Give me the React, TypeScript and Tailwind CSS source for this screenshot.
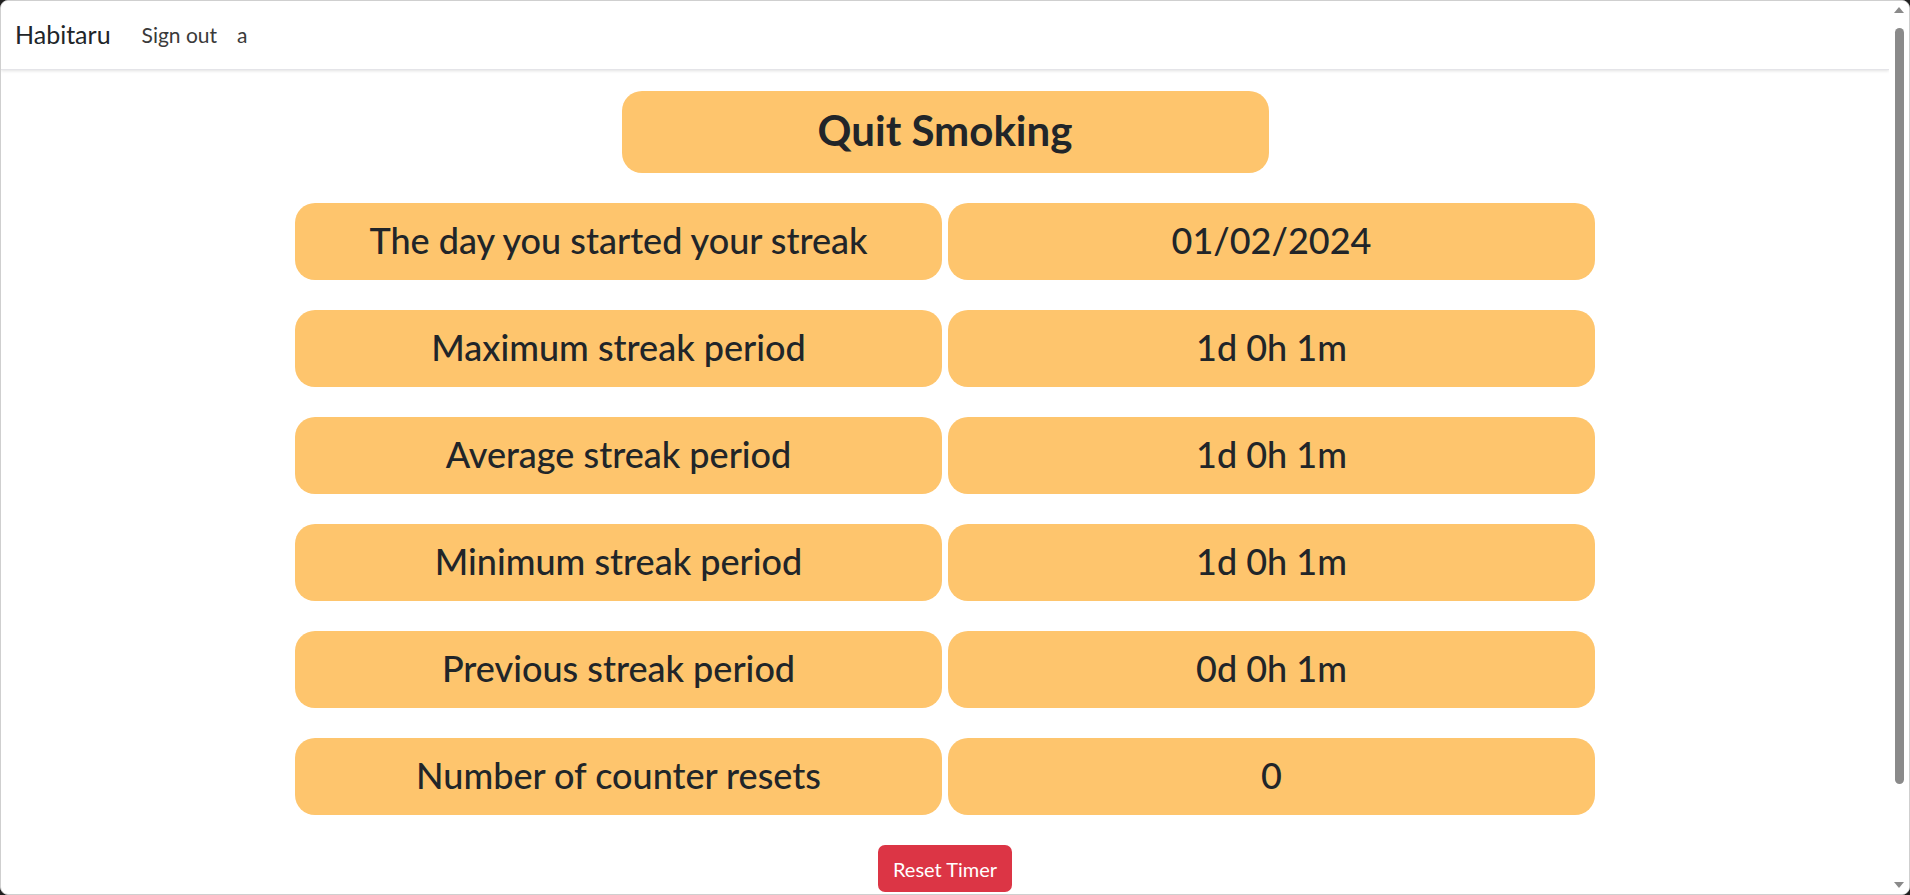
const stats = [
  { label: "The day you started your streak", value: "01/02/2024" },
  { label: "Maximum streak period", value: "1d 0h 1m" },
  { label: "Average streak period", value: "1d 0h 1m" },
  { label: "Minimum streak period", value: "1d 0h 1m" },
  { label: "Previous streak period", value: "0d 0h 1m" },
  { label: "Number of counter resets", value: "0" },
]

const font = { fontFamily: '"Segoe UI", Lato, "Noto Sans", sans-serif' }

function Navbar() {
  return (
    <nav className="h-[69px] shrink-0 flex items-center pl-[14px] bg-white shadow-[0_1px_3px_rgba(0,0,0,0.12)] border-b border-[#e4e4e8]">
      <span className="text-[25px] text-[#212529] mr-[31px]">Habitaru</span>
      <span className="text-[21px] text-[#3a3a3a] mr-[20px]">Sign out</span>
      <span className="text-[21px] text-[#3a3a3a]">a</span>
    </nav>
  )
}

function StatBox({ children }: { children: React.ReactNode }) {
  return (
    <div className="h-[77px] pb-[3px] rounded-[20px] bg-[#fec56d] flex items-center justify-center text-[36px] font-medium text-[#212529]">
      {children}
    </div>
  )
}

function Scrollbar() {
  return (
    <div className="w-[20px] shrink-0 bg-white flex flex-col items-center pt-[6px] pb-[6px]">
      <div className="w-0 h-0 border-l-[5px] border-r-[5px] border-b-[6px] border-l-transparent border-r-transparent border-b-[#8a8a8a]" />
      <div className="w-[9px] h-[756px] mt-[15px] rounded-full bg-[#8a8a8a]" />
      <div className="flex-1" />
      <div className="w-0 h-0 border-l-[5px] border-r-[5px] border-t-[6px] border-l-transparent border-r-transparent border-t-[#8a8a8a]" />
    </div>
  )
}

export default function App() {
  return (
    <div className="w-[1910px] h-[895px] bg-[#202020]" style={font}>
      <div className="w-full h-full flex overflow-hidden bg-white border border-[#cfcfcf] rounded-[8px]">
        <div className="flex-1 flex flex-col">
          <Navbar />
          <main className="flex flex-col items-center pt-[21px]">
            <div className="w-[647px] h-[82px] pb-[3px] rounded-[20px] bg-[#fec56d] flex items-center justify-center">
              <h2 className="text-[42px] font-bold text-[#212529]">Quit Smoking</h2>
            </div>
            <div className="mt-[30px] grid grid-cols-[647px_647px] gap-x-[6px] gap-y-[30px]">
              {stats.map((s) => (
                <div key={s.label} className="contents">
                  <StatBox>{s.label}</StatBox>
                  <StatBox>{s.value}</StatBox>
                </div>
              ))}
            </div>
            <button className="mt-[30px] w-[134px] h-[47px] rounded-[7px] bg-[#dc3545] text-white text-[20px]">
              Reset Timer
            </button>
          </main>
        </div>
        <Scrollbar />
      </div>
    </div>
  )
}
